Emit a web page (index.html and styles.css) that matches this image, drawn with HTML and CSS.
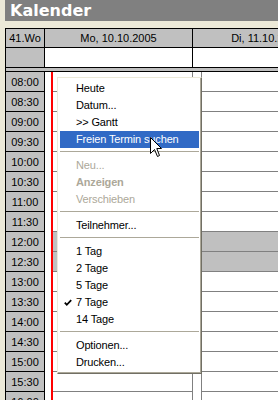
FILE: index.html
```html
<!DOCTYPE html>
<html>
<head>
<meta charset="utf-8">
<link rel="stylesheet" href="styles.css">
</head>
<body>
<div class="app">
  <div class="titlebar">Kalender</div>
  <div class="cal">
    <div class="hrow r1">
      <div class="wk">41.Wo</div>
      <div class="dh">Mo, 10.10.2005</div>
      <div class="dh">Di, 11.10.2005</div>
    </div>
    <div class="hrow r2">
      <div class="wk"></div>
      <div class="dh white"></div>
      <div class="dh white"></div>
    </div>
    <div class="gap"></div>
    <div class="bodyrow">
      <div class="times">
        <div class="t">08:00</div><div class="t">08:30</div><div class="t">09:00</div><div class="t">09:30</div>
        <div class="t">10:00</div><div class="t">10:30</div><div class="t">11:00</div><div class="t">11:30</div>
        <div class="t">12:00</div><div class="t">12:30</div><div class="t">13:00</div><div class="t">13:30</div>
        <div class="t">14:00</div><div class="t">14:30</div><div class="t">15:00</div><div class="t">15:30</div>
        <div class="t">16:00</div><div class="t">16:30</div>
      </div>
      <div class="day mo">
        <div class="strip today"></div>
        <div class="slots">
          <div class="s"></div><div class="s"></div><div class="s"></div><div class="s"></div>
          <div class="s"></div><div class="s"></div><div class="s"></div><div class="s"></div>
          <div class="s lunch"></div><div class="s lunch"></div><div class="s"></div><div class="s"></div>
          <div class="s"></div><div class="s"></div><div class="s"></div><div class="s"></div>
          <div class="s"></div><div class="s"></div>
        </div>
      </div>
      <div class="day di">
        <div class="strip"></div>
        <div class="slots">
          <div class="s"></div><div class="s"></div><div class="s"></div><div class="s"></div>
          <div class="s"></div><div class="s"></div><div class="s"></div><div class="s"></div>
          <div class="s lunch"></div><div class="s lunch"></div><div class="s"></div><div class="s"></div>
          <div class="s"></div><div class="s"></div><div class="s"></div><div class="s"></div>
          <div class="s"></div><div class="s"></div>
        </div>
      </div>
    </div>
  </div>
</div>

<div class="menu">
  <div class="mi">Heute</div>
  <div class="mi">Datum...</div>
  <div class="mi">&gt;&gt; Gantt</div>
  <div class="mi hl">Freien Termin suchen</div>
  <div class="sep"></div>
  <div class="mi dis">Neu...</div>
  <div class="mi dis bold">Anzeigen</div>
  <div class="mi dis">Verschieben</div>
  <div class="sep"></div>
  <div class="mi">Teilnehmer...</div>
  <div class="sep"></div>
  <div class="mi">1 Tag</div>
  <div class="mi">2 Tage</div>
  <div class="mi">5 Tage</div>
  <div class="mi checked"><svg class="check" width="8" height="8" viewBox="0 0 8 8"><polyline points="0.8,3.6 2.8,5.8 7.2,1.2" fill="none" stroke="#000" stroke-width="1.8"/></svg>7 Tage</div>
  <div class="mi">14 Tage</div>
  <div class="sep"></div>
  <div class="mi">Optionen...</div>
  <div class="mi">Drucken...</div>
</div>

<svg class="cursor" width="13" height="21" viewBox="0 0 13 21"><path d="M0.5 0.5 L0.5 16.5 L4.5 12.5 L7.5 19.5 L9.5 18.5 L6.8 11.5 L11.5 11.5 Z" fill="#fff" stroke="#000" stroke-width="1"/></svg>
</body>
</html>
```

FILE: styles.css
```css
html, body {
  margin: 0;
  height: 400px;
  overflow: hidden;
  background: #ece9d8;
  font-family: "Liberation Sans", Arial, sans-serif;
  font-size: 11px;
  color: #000;
}

.app {
  padding-left: 5px;
}

.titlebar {
  height: 21px;
  background: #808080;
  color: #fff;
  font: bold 16px "DejaVu Sans", Verdana, sans-serif;
  line-height: 21px;
  padding-left: 5px;
  margin-bottom: 7px;
}

.cal {
  border-top: 1px solid #000;
  border-left: 1px solid #000;
  width: 600px;
}

.hrow {
  display: flex;
  border-bottom: 1px solid #000;
}

.r1 { height: 18px; line-height: 19px; }
.r2 { height: 19px; }

.wk {
  width: 38px;
  flex: none;
  border-right: 1px solid #000;
  background: #c0c0c0;
  text-align: center;
}

.dh {
  width: 147px;
  flex: none;
  border-right: 1px solid #000;
  background: #c0c0c0;
  text-align: center;
  white-space: nowrap;
}

.dh.white { background: #fff; }

.gap {
  height: 3px;
  background: #c0c0c0;
  border-bottom: 1px solid #000;
}

.bodyrow {
  display: flex;
}

.times {
  width: 38px;
  flex: none;
  border-right: 1px solid #000;
}

.t {
  height: 19px;
  border-bottom: 1px solid #000;
  background: #c0c0c0;
  text-align: center;
  line-height: 21px;
}

.day {
  display: flex;
  flex: none;
  background: #fff;
}

.strip {
  width: 8px;
  background: #fff;
  border-right: 1px solid #808080;
}

.strip.today {
  width: 6px;
  border-right: 2px solid #ff0000;
}

.mo .slots {
  width: 139px;
  border-right: 1px solid #808080;
}

.di .slots {
  width: 200px;
}

.s {
  height: 19px;
  border-bottom: 1px solid #808080;
  background: #fff;
}

.s.lunch { background: #c0c0c0; }

.menu {
  position: absolute;
  left: 57px;
  top: 77px;
  width: 145px;
  box-sizing: border-box;
  padding: 2px;
  background: #fff;
  border: 1px solid;
  border-color: #ece9d8 #716f64 #716f64 #ece9d8;
  box-shadow: inset -1px -1px 0 #aca899, inset 1px 1px 0 #fff;
}

.mi {
  position: relative;
  height: 17px;
  line-height: 17px;
  padding-left: 16px;
  white-space: nowrap;
  letter-spacing: -0.15px;
}

.mi.hl {
  background: #316ac5;
  color: #fff;
}

.mi.dis { color: #aca899; }
.mi.bold { font-weight: bold; }

.check {
  position: absolute;
  left: 4px;
  top: 5px;
}

.sep {
  height: 1px;
  margin: 3px 0 5px;
  background: #aca899;
}

.cursor {
  position: absolute;
  left: 150px;
  top: 137px;
}
```
